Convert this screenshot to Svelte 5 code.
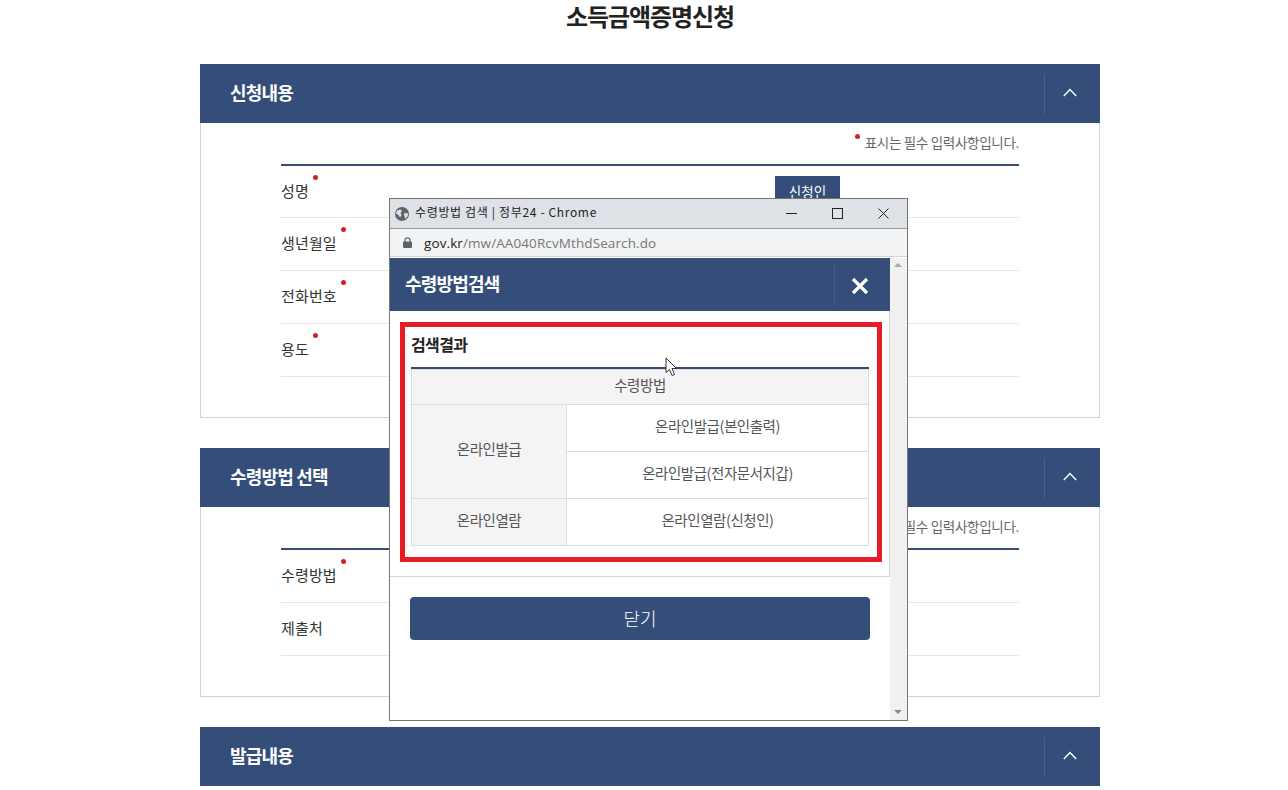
<script>
  const sections = [
    { title: '신청내용', rows: [
      { label: '성명', req: true, btn: '신청인' },
      { label: '생년월일', req: true },
      { label: '전화번호', req: true },
      { label: '용도', req: true }
    ] },
    { title: '수령방법 선택', rows: [
      { label: '수령방법', req: true },
      { label: '제출처', req: false }
    ] }
  ];
</script>

{#snippet chevron()}
  <span class="toggle">
    <svg width="14" height="9" viewBox="0 0 14 9" fill="none" stroke="#fff" stroke-width="1.4"><path d="M.8 8 7 1.500 13.200 8" /></svg>
  </span>
{/snippet}

<div class="page">
  <h1>소득금액증명신청</h1>

  {#each sections as s}
    <section>
      <header class="bar">
        <h2>{s.title}</h2>
        {@render chevron()}
      </header>
      <div class="body">
        <p class="note"><i class="dot"></i>표시는 필수 입력사항입니다.</p>
        <div class="rows">
          {#each s.rows as r}
            <div class="row">
              <span class="label">{r.label}{#if r.req}<i class="dot"></i>{/if}</span>
              {#if r.btn}<span class="who">{r.btn}</span>{/if}
            </div>
          {/each}
        </div>
      </div>
    </section>
  {/each}

  <section>
    <header class="bar">
      <h2>발급내용</h2>
      {@render chevron()}
    </header>
  </section>
</div>

<div class="popup">
  <div class="titlebar">
    <svg class="globe" width="14" height="14" viewBox="0 0 14 14"><circle cx="7" cy="7" r="7" fill="#5f6368" /><path d="M2 3.500 5.500 2.500 7 4 5.500 6 6.500 8 5 10.500 3.500 8 1 6.500zM8.500 6.500 12.500 6 13 8.500 10.500 12 9.500 9z" fill="#dee1e6" /></svg>
    <span class="wintitle">수령방법 검색 | 정부24 - Chrome</span>
    <div class="controls">
      <svg width="11" height="11" viewBox="0 0 11 11" stroke="#222" fill="none"><path d="M0 5.500h11" /></svg>
      <svg width="11" height="11" viewBox="0 0 11 11" stroke="#222" fill="none"><rect x=".5" y=".5" width="10" height="10" /></svg>
      <svg width="11" height="11" viewBox="0 0 11 11" stroke="#222" fill="none"><path d="M.5.500l10 10M10.500.500l-10 10" /></svg>
    </div>
  </div>
  <div class="urlbar">
    <svg width="9" height="11" viewBox="0 0 9 11"><path d="M2 5V3.300a2.500 2.500 0 0 1 5 0V5" fill="none" stroke="#5f6368" stroke-width="1.200" /><rect y="4.500" width="9" height="6.500" rx="1" fill="#5f6368" /></svg>
    <span class="url"><b>gov.kr</b>/mw/AA040RcvMthdSearch.do</span>
  </div>
  <div class="view">
    <div class="content">
      <div class="content-top">
        <header class="popbar">
          <h3>수령방법검색</h3>
          <span class="popclose">
            <svg width="18" height="18" viewBox="0 0 18 18" stroke="#fff" stroke-width="3.200" fill="none"><path d="M2 2l14 14M16 2 2 16" /></svg>
          </span>
        </header>
        <div class="panel">
          <div class="redbox">
            <h4>검색결과</h4>
            <table>
              <colgroup><col class="col-a" /><col /></colgroup>
              <thead>
                <tr><th colspan="2">수령방법</th></tr>
              </thead>
              <tbody>
                <tr><th rowspan="2">온라인발급</th><td>온라인발급(본인출력)</td></tr>
                <tr><td>온라인발급(전자문서지갑)</td></tr>
                <tr><th>온라인열람</th><td>온라인열람(신청인)</td></tr>
              </tbody>
            </table>
          </div>
        </div>
      </div>
      <button class="closebtn">닫기</button>
    </div>
    <div class="scroll">
      <i class="arrow up"></i>
      <i class="arrow down"></i>
    </div>
  </div>
</div>

<svg class="cursor" width="14" height="20" viewBox="0 0 14 20"><path d="M1 1v14.500l3.500-3 2.500 6 2.500-1-2.500-6h4.500z" fill="#fff" stroke="#333" stroke-width="1" /></svg>

<style>
  :global(body) {
    margin: 0;
    background: #fff;
    overflow: hidden;
    font-family: "Noto Sans CJK KR", "Noto Sans", sans-serif;
  }
  .page { width: 900px; margin-left: 200px; height: 790px; overflow: hidden; }
  h1 {
    margin: 0 0 33px;
    height: 30px;
    padding-top: 1px;
    line-height: 30px;
    font-size: 24px;
    font-weight: 700;
    letter-spacing: -1.1px;
    text-align: center;
    color: #222;
  }
  section { margin-bottom: 30px; }
  .bar {
    height: 59px;
    background: #344e79;
    display: flex;
    align-items: center;
    justify-content: space-between;
    padding-left: 30px;
  }
  h2 {
    margin: 0 0 4px;
    font-size: 18px;
    font-weight: 700;
    letter-spacing: -.8px;
    color: #fff;
  }
  .toggle {
    width: 56px;
    height: 40px;
    box-sizing: border-box;
    padding: 0 6px 3px 0;
    border-left: 1px solid #47608a;
    display: flex;
    align-items: center;
    justify-content: center;
  }
  .body {
    border: 1px solid #d2d2d2;
    border-top: 0;
    padding: 0 80px 40px;
  }
  .note {
    margin: 0;
    height: 41px;
    line-height: 38px;
    text-align: right;
    font-size: 13.500px;
    letter-spacing: -.3px;
    color: #666;
  }
  .note .dot { position: relative; top: -9px; left: -2px; margin-right: 3px; }
  .rows { border-top: 2px solid #344e79; }
  .row {
    height: 53px;
    box-sizing: border-box;
    border-bottom: 1px solid #e6e6e6;
    display: flex;
    align-items: flex-start;
    justify-content: space-between;
  }
  section:first-of-type .row:first-child { height: 52px; }
  .label {
    padding-top: 14px;
    font-size: 15px;
    letter-spacing: .15px;
    color: #333;
  }
  .label .dot { position: relative; top: -17px; left: 4px; }
  .dot {
    display: inline-block;
    width: 5px;
    height: 5px;
    border-radius: 50%;
    background: #d0202c;
  }
  .who {
    margin: 10px 179px 0 0;
    width: 65px;
    height: 36px;
    line-height: 30px;
    background: #344e79;
    color: #fff;
    font-size: 13.500px;
    text-align: center;
  }

  .popup {
    position: absolute;
    left: 389px;
    top: 198px;
    width: 517px;
    height: 521px;
    border: 1px solid #777;
    background: #fff;
    display: flex;
    flex-direction: column;
  }
  .titlebar {
    height: 30px;
    flex: none;
    background: #dee1e6;
    border-bottom: 1px solid #9a9a9a;
    box-sizing: border-box;
    display: flex;
    align-items: center;
    padding-left: 5px;
    font-size: 12px;
    color: #222;
  }
  .wintitle { margin: 0 0 4px 6px; letter-spacing: .65px; }
  .controls {
    margin-left: auto;
    display: flex;
    gap: 35px;
    padding-right: 18px;
  }
  .urlbar {
    height: 28px;
    flex: none;
    box-sizing: border-box;
    background: #f1f3f4;
    border-bottom: 1px solid #cfd1d3;
    display: flex;
    align-items: center;
    padding-left: 13px;
  }
  .url {
    margin-left: 12px;
    font-family: "Open Sans", "Noto Sans", sans-serif;
    font-size: 13.500px;
    letter-spacing: .1px;
    color: #777;
  }
  .url b { font-weight: 400; color: #222; }
  .view { flex: 1; display: flex; min-height: 0; margin-top: 1px; }
  .content { flex: 1; min-width: 0; }
  .content-top {
    border-right: 1px solid #d5d5d5;
    border-bottom: 1px solid #d5d5d5;
  }
  .popbar {
    height: 53px;
    background: #344e79;
    margin-right: -1px;
    display: flex;
    align-items: center;
    justify-content: space-between;
    padding-left: 15px;
  }
  h3 {
    margin: 0 0 4px;
    font-size: 18px;
    font-weight: 700;
    letter-spacing: -.8px;
    color: #fff;
  }
  .popclose {
    width: 56px;
    height: 40px;
    box-sizing: border-box;
    padding: 3px 5px 0 0;
    border-left: 1px solid #47608a;
    display: flex;
    align-items: center;
    justify-content: center;
  }
  .panel { padding: 11px 7px 14px 10px; }
  .redbox {
    border: 5px solid #e81c27;
    padding: 0 8px 11px 6px;
  }
  h4 {
    margin: 0;
    height: 40px;
    line-height: 34px;
    font-size: 16px;
    font-weight: 700;
    letter-spacing: -.6px;
    color: #222;
    border-bottom: 2px solid #344e79;
  }
  table {
    width: 100%;
    border-collapse: collapse;
    table-layout: fixed;
    font-size: 14.500px;
    letter-spacing: -.45px;
    color: #555;
  }
  .col-a { width: 155px; }
  th, td {
    border: 1px solid #dcdcdc;
    text-align: center;
    height: 47px;
    padding: 0 0 6px;
    font-weight: 400;
    box-sizing: border-box;
  }
  th { background: #f4f4f4; }
  thead th { height: 35px; }
  .closebtn {
    display: block;
    width: 460px;
    height: 43px;
    margin: 20px 0 0 20px;
    padding: 0 0 2px;
    border: 0;
    border-radius: 4px;
    background: #344e79;
    color: #fff;
    font: 300 18px "Noto Sans CJK KR", sans-serif;
  }
  .scroll {
    width: 17px;
    flex: none;
    background: #f1f1f1;
    position: relative;
  }
  .arrow {
    position: absolute;
    left: 4px;
    width: 0;
    height: 0;
    border-left: 4px solid transparent;
    border-right: 4px solid transparent;
  }
  .up { top: 5px; border-bottom: 4px solid #a8a8a8; }
  .down { bottom: 6px; border-top: 4px solid #8a8a8a; }
  .cursor { position: absolute; left: 665px; top: 357px; }
</style>
